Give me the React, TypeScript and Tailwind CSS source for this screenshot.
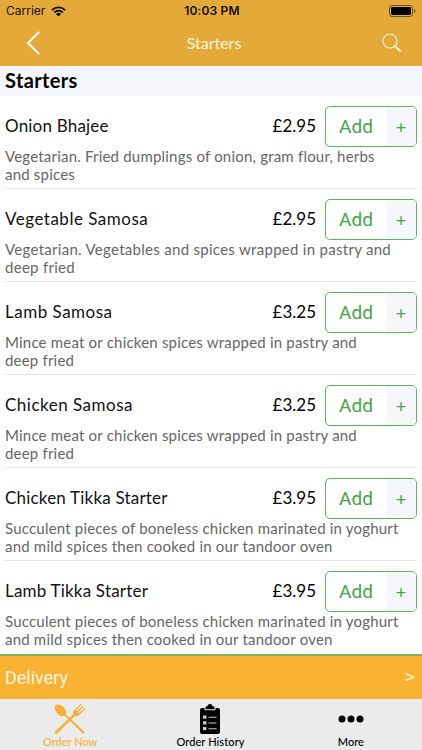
import clsx from "clsx";

interface MenuItem {
  name: string;
  price: string;
  lines: string[];
  wide?: boolean;
}

const items: MenuItem[] = [
  {
    name: "Onion Bhajee",
    price: "£2.95",
    lines: ["Vegetarian. Fried dumplings of onion, gram flour, herbs", "and spices"],
  },
  {
    name: "Vegetable Samosa",
    price: "£2.95",
    lines: ["Vegetarian. Vegetables and spices wrapped in pastry and", "deep fried"],
    wide: true,
  },
  {
    name: "Lamb Samosa",
    price: "£3.25",
    lines: ["Mince meat or chicken spices wrapped in pastry and", "deep fried"],
  },
  {
    name: "Chicken Samosa",
    price: "£3.25",
    lines: ["Mince meat or chicken spices wrapped in pastry and", "deep fried"],
  },
  {
    name: "Chicken Tikka Starter",
    price: "£3.95",
    lines: [
      "Succulent pieces of boneless chicken marinated in yoghurt",
      "and mild spices then cooked in our tandoor oven",
    ],
  },
  {
    name: "Lamb Tikka Starter",
    price: "£3.95",
    lines: [
      "Succulent pieces of boneless chicken marinated in yoghurt",
      "and mild spices then cooked in our tandoor oven",
    ],
  },
];

function WifiIcon() {
  return (
    <svg width="15" height="11" viewBox="0 0 15 11" fill="none" stroke="#111" strokeWidth="1.9">
      <path d="M0.9 4.1a9.4 9.4 0 0 1 13.2 0" />
      <path d="M3.2 6.5a6.1 6.1 0 0 1 8.6 0" />
      <path d="M7.5 10.6 4.9 8a3.7 3.7 0 0 1 5.2 0z" fill="#111" stroke="none" />
    </svg>
  );
}

function BatteryIcon() {
  return (
    <svg width="27" height="12" viewBox="0 0 27 12">
      <rect x="0.5" y="0.5" width="23" height="11" rx="2.6" fill="none" stroke="#6b5120" />
      <rect x="2" y="2" width="20" height="8" rx="1.4" fill="#000" />
      <path d="M25 4v4c.9-.3 1.4-1.1 1.4-2S25.9 4.3 25 4z" fill="#6b5120" />
    </svg>
  );
}

function CutleryIcon() {
  return (
    <svg width="32" height="32" viewBox="0 0 34 33" fill="#f6b037">
      <path d="M1.3 2.3C2.7.4 6.6.5 9.8 3.5c3 2.9 3.7 5.7 2.9 8.3L31.8 29.4c.6.6.7 1.400.1 2-.6.6-1.400.6-2 0L11.300 12.900c-2.500.9-5.200.3-7.700-2.300C.9 7.800.1 4.200 1.300 2.300z" />
      <path d="M1.200 29.800 20.500 11.500c-.6-1.900-.1-3.300 1.200-4.600L28.600.4l.8.7-6 6.100.9.9 6.400-5.700.8.800-5.900 6.200.9.900 6.300-5.800.9.800-6.600 6.800c-1.500 1.500-3.200 2-5.100 1.400L3.300 31.800c-.7.7-1.600.6-2.200 0-.6-.6-.5-1.400.1-2z" />
    </svg>
  );
}

function ClipboardIcon() {
  return (
    <svg width="20" height="30" viewBox="0 0 20 30">
      <path
        d="M2 4h2.500v2.200h11V4H18a2 2 0 0 1 2 2v22a2 2 0 0 1-2 2H2a2 2 0 0 1-2-2V6a2 2 0 0 1 2-2z"
        fill="#000"
      />
      <path
        d="M5.500 5.300V3.600C5.500 2.700 6.300 2.300 7.500 2.300 7.700.9 8.700 0 10 0s2.300.9 2.500 2.300c1.200 0 2 .4 2 1.300v1.700z"
        fill="#000"
      />
      <g fill="#c8c8c8">
        <rect x="3" y="11.500" width="3.500" height="3.200" />
        <rect x="3" y="17.300" width="3.500" height="3.200" />
        <rect x="3" y="23" width="3.500" height="3.200" />
      </g>
      <path d="M8.500 13.200h8M8.500 19h8M8.500 24.700h8" stroke="#c8c8c8" strokeWidth="1.100" />
    </svg>
  );
}

function MenuRow({ item }: { item: MenuItem }) {
  const samosa = item.name.endsWith("Samosa");

  return (
    <div className="mx-[5px] h-[93px] border-b border-[#e3e3e3] pt-[10px] last:border-transparent">
      <div className="flex h-[41px] items-center">
        <span
          className={clsx(
            "flex-1 pb-px text-[17px] text-[#111]",
            samosa ? "tracking-[0.5px]" : "tracking-[0.2px]",
          )}
        >
          {item.name}
        </span>
        <span className="mr-[9px] pb-px text-[17px] text-black">{item.price}</span>
        <button className="flex h-[41px] w-[92px] overflow-hidden rounded-[5px] border border-[#5cb55f] text-[#43a548]">
          <span className="flex h-full w-[60px] items-center justify-center pt-[2px] font-['Roboto',sans-serif] text-[19px]">
            Add
          </span>
          <span className="flex h-full flex-1 items-center justify-center bg-[#f5f6f9] pt-[2px] text-[18px]">
            +
          </span>
        </button>
      </div>
      <div
        className={clsx(
          "text-[15px] leading-[18px] text-[#666]",
          item.wide ? "tracking-[0.29px]" : "tracking-[0.2px]",
        )}
      >
        {item.lines.map((line) => (
          <p key={line} className="whitespace-nowrap">
            {line}
          </p>
        ))}
      </div>
    </div>
  );
}

export default function App() {
  return (
    <div className="flex h-[750px] w-[422px] flex-col overflow-hidden bg-white font-['Lato',sans-serif]">
      <header className="h-[66px] shrink-0 bg-[#e5a93a]">
        <div className="grid h-[22px] grid-cols-3 items-center px-[6px] font-['Inter',sans-serif] text-[12px] text-[#111]">
          <div className="flex items-center gap-[6px]">
            <span>Carrier</span>
            <WifiIcon />
          </div>
          <span className="pl-[2px] text-center font-semibold tracking-[0.15px]">10:03 PM</span>
          <div className="flex justify-end">
            <BatteryIcon />
          </div>
        </div>
        <div className="grid h-[43px] grid-cols-3 items-center pr-[20px] pl-[26px]">
          <svg
            className="mb-px"
            width="14"
            height="24"
            viewBox="0 0 14 24"
            fill="none"
            stroke="#fff"
            strokeWidth="2"
          >
            <path d="M13 1 2 12l11 11" />
          </svg>
          <span className="pb-[2px] text-center text-[16px] text-[#fff6df]">Starters</span>
          <svg
            className="mb-[2px] justify-self-end"
            width="20"
            height="20"
            viewBox="0 0 20 20"
            fill="none"
            stroke="#fff6df"
          >
            <circle cx="8" cy="8" r="7" strokeWidth="1.200" />
            <path d="m13 13 5.500 5.500" strokeWidth="2" />
          </svg>
        </div>
      </header>

      <h2 className="flex h-[30px] shrink-0 items-center bg-[#f5f6f9] pb-[3px] pl-[5px] text-[20px] font-bold tracking-[0.350px] text-black">
        Starters
      </h2>

      <main className="h-[558px] shrink-0">
        {items.map((item) => (
          <MenuRow key={item.name} item={item} />
        ))}
      </main>

      <div className="flex h-[45px] shrink-0 items-center justify-between border-t-2 border-[#84b060] bg-[#fab232] pr-[7px] pl-[5px] text-[#fff6df]">
        <span className="font-['Roboto',sans-serif] text-[18px]">Delivery</span>
        <span className="font-['Roboto',sans-serif] text-[19px]">&gt;</span>
      </div>

      <nav className="grid flex-1 grid-cols-3 bg-[#ebebeb] pr-px text-[11px] font-medium">
        <div className="flex flex-col items-center pt-[4px] text-[#f6b037]">
          <CutleryIcon />
          <span className="leading-[13px]">Order Now</span>
        </div>
        <div className="flex flex-col items-center pt-[5px] text-black">
          <ClipboardIcon />
          <span className="mt-px leading-[13px] tracking-[0.1px]">Order History</span>
        </div>
        <div className="flex flex-col items-center pt-[16px] text-black">
          <svg width="26" height="8" viewBox="0 0 26 8">
            <circle cx="4" cy="4" r="3.500" />
            <circle cx="13" cy="4" r="3.500" />
            <circle cx="22" cy="4" r="3.500" />
          </svg>
          <span className="mt-[12px] leading-[13px]">More</span>
        </div>
      </nav>
    </div>
  );
}
